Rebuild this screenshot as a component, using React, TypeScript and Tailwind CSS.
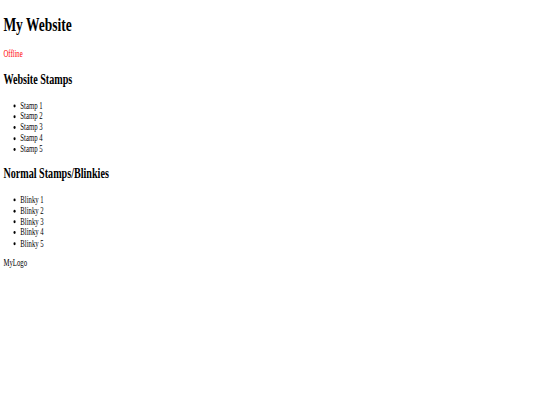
import React from 'react';

const STAMPS = ['Stamp 1', 'Stamp 2', 'Stamp 3', 'Stamp 4', 'Stamp 5'];
const BLINKIES = ['Blinky 1', 'Blinky 2', 'Blinky 3', 'Blinky 4', 'Blinky 5'];

// The page is laid out as a plain 1280px-wide document, then squeezed into the
// 540x405 window the same way the reference shot was.
const App: React.FC = () => {
  return (
    <div className="w-[540px] h-[405px] overflow-hidden bg-white">
      <div className="w-[1280px] origin-top-left scale-x-[0.4219] scale-y-[0.594] px-[8px] pt-[23px] font-['Liberation_Serif','Times_New_Roman',serif] text-[16px] leading-[1.15] text-black">
        <h1 className="text-[32px] font-bold">My Website</h1>
        <p className="mt-[22.5px] text-[#ff0000]">Offline</p>

        <h2 className="mt-[20.5px] text-[24px] font-bold">Website Stamps</h2>
        <ul className="mt-[19.92px] list-disc pl-[40px]">
          {STAMPS.map(s => (
            <li key={s}>{s}</li>
          ))}
        </ul>

        <h2 className="mt-[18.5px] text-[24px] font-bold">Normal Stamps/Blinkies</h2>
        <ul className="mt-[20.5px] list-disc pl-[40px]">
          {BLINKIES.map(b => (
            <li key={b}>{b}</li>
          ))}
        </ul>

        <p className="mt-[14px]">MyLogo</p>
      </div>
    </div>
  );
};

export default App;
